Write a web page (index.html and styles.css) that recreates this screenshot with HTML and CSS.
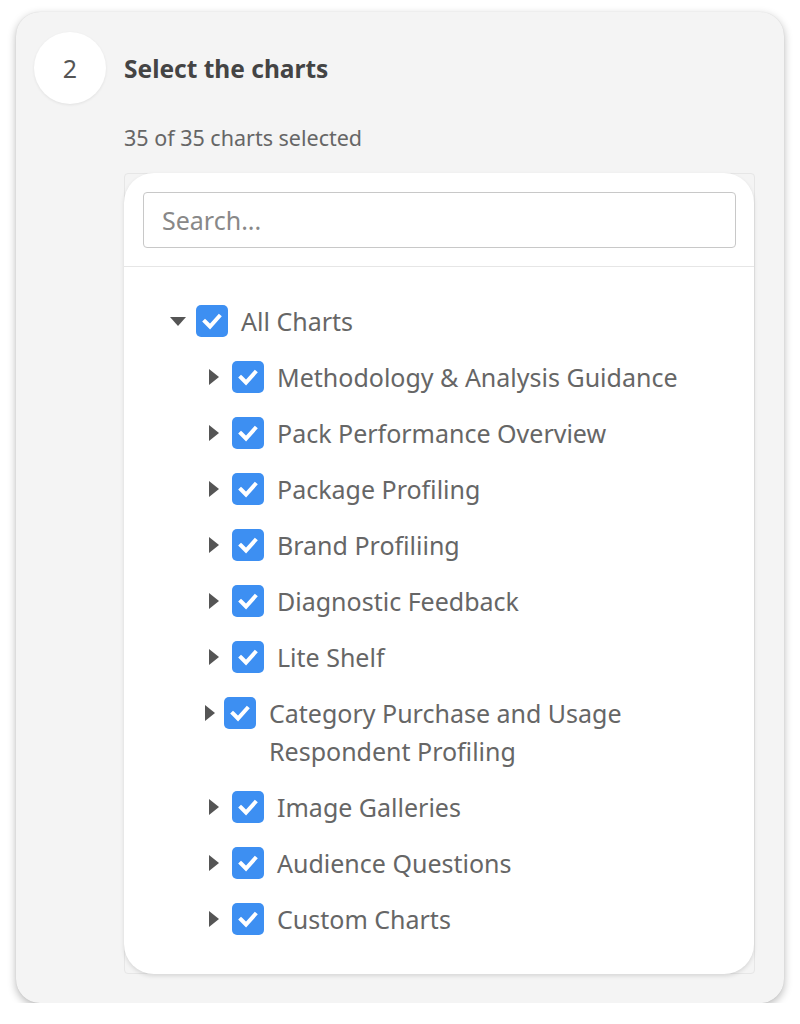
FILE: index.html
```html
<!DOCTYPE html>
<html>
<head>
<meta charset="utf-8">
<link rel="stylesheet" href="styles.css">
</head>
<body>
<div class="card">
  <div class="header">
    <div class="step">2</div>
    <div class="title">Select the charts</div>
  </div>
  <div class="body">
    <div class="count">35 of 35 charts selected</div>
    <div class="frame">
      <div class="panel">
        <div class="search-wrap">
          <input class="search" type="text" placeholder="Search...">
        </div>
        <div class="tree">
          <div class="row root">
            <span class="caret"><span class="tri-down"></span></span>
            <span class="check"><svg viewBox="0 0 32 32" width="32" height="32"><path d="M9 16.5l5 5 9-10" fill="none" stroke="#fff" stroke-width="4" stroke-linecap="square"/></svg></span>
            <span class="label">All Charts</span>
          </div>
          <div class="children">
            <div class="row">
              <span class="caret"><span class="tri-right"></span></span>
              <span class="check"><svg viewBox="0 0 32 32" width="32" height="32"><path d="M9 16.5l5 5 9-10" fill="none" stroke="#fff" stroke-width="4" stroke-linecap="square"/></svg></span>
              <span class="label">Methodology &amp; Analysis Guidance</span>
            </div>
            <div class="row">
              <span class="caret"><span class="tri-right"></span></span>
              <span class="check"><svg viewBox="0 0 32 32" width="32" height="32"><path d="M9 16.5l5 5 9-10" fill="none" stroke="#fff" stroke-width="4" stroke-linecap="square"/></svg></span>
              <span class="label">Pack Performance Overview</span>
            </div>
            <div class="row">
              <span class="caret"><span class="tri-right"></span></span>
              <span class="check"><svg viewBox="0 0 32 32" width="32" height="32"><path d="M9 16.5l5 5 9-10" fill="none" stroke="#fff" stroke-width="4" stroke-linecap="square"/></svg></span>
              <span class="label">Package Profiling</span>
            </div>
            <div class="row">
              <span class="caret"><span class="tri-right"></span></span>
              <span class="check"><svg viewBox="0 0 32 32" width="32" height="32"><path d="M9 16.5l5 5 9-10" fill="none" stroke="#fff" stroke-width="4" stroke-linecap="square"/></svg></span>
              <span class="label">Brand Profiliing</span>
            </div>
            <div class="row">
              <span class="caret"><span class="tri-right"></span></span>
              <span class="check"><svg viewBox="0 0 32 32" width="32" height="32"><path d="M9 16.5l5 5 9-10" fill="none" stroke="#fff" stroke-width="4" stroke-linecap="square"/></svg></span>
              <span class="label">Diagnostic Feedback</span>
            </div>
            <div class="row">
              <span class="caret"><span class="tri-right"></span></span>
              <span class="check"><svg viewBox="0 0 32 32" width="32" height="32"><path d="M9 16.5l5 5 9-10" fill="none" stroke="#fff" stroke-width="4" stroke-linecap="square"/></svg></span>
              <span class="label">Lite Shelf</span>
            </div>
            <div class="row wrap">
              <span class="caret"><span class="tri-right"></span></span>
              <span class="check"><svg viewBox="0 0 32 32" width="32" height="32"><path d="M9 16.5l5 5 9-10" fill="none" stroke="#fff" stroke-width="4" stroke-linecap="square"/></svg></span>
              <span class="label">Category Purchase and Usage Respondent Profiling</span>
            </div>
            <div class="row">
              <span class="caret"><span class="tri-right"></span></span>
              <span class="check"><svg viewBox="0 0 32 32" width="32" height="32"><path d="M9 16.5l5 5 9-10" fill="none" stroke="#fff" stroke-width="4" stroke-linecap="square"/></svg></span>
              <span class="label">Image Galleries</span>
            </div>
            <div class="row">
              <span class="caret"><span class="tri-right"></span></span>
              <span class="check"><svg viewBox="0 0 32 32" width="32" height="32"><path d="M9 16.5l5 5 9-10" fill="none" stroke="#fff" stroke-width="4" stroke-linecap="square"/></svg></span>
              <span class="label">Audience Questions</span>
            </div>
            <div class="row">
              <span class="caret"><span class="tri-right"></span></span>
              <span class="check"><svg viewBox="0 0 32 32" width="32" height="32"><path d="M9 16.5l5 5 9-10" fill="none" stroke="#fff" stroke-width="4" stroke-linecap="square"/></svg></span>
              <span class="label">Custom Charts</span>
            </div>
          </div>
        </div>
      </div>
    </div>
  </div>
</div>
</body>
</html>
```

FILE: styles.css
```css
* { box-sizing: border-box; }
html, body { margin: 0; padding: 0; background: #fff; }
body {
  padding: 12px 16px 0 16px;
  font-family: "Noto Sans", "Open Sans", sans-serif;
}
.card {
  width: 768px;
  height: 991px;
  background: #f4f4f4;
  border-radius: 24px;
  box-shadow: 0 3px 8px rgba(0,0,0,0.28), 0 0 1px rgba(0,0,0,0.12);
  padding: 20px 29px 29px 18px;
  display: flex;
  flex-direction: column;
}
.header {
  display: flex;
  align-items: center;
  gap: 18px;
  height: 72px;
}
.step {
  width: 72px;
  height: 72px;
  border-radius: 50%;
  background: #fff;
  box-shadow: 0 1px 3px rgba(0,0,0,0.08);
  display: flex;
  align-items: center;
  justify-content: center;
  font-size: 25px;
  color: #555;
  flex-shrink: 0;
}
.title {
  font-size: 24.5px;
  font-weight: 700;
  color: #444;
}
.body {
  padding-left: 90px;
  flex: 1;
  display: flex;
  flex-direction: column;
}
.count {
  margin-top: 21px;
  font-size: 21.5px;
  line-height: 26px;
  color: #666;
}
.frame {
  margin-top: 22px;
  flex: 1;
  border: 1px solid #e6e6e6;
  border-radius: 4px;
  display: flex;
}
.panel {
  flex: 1;
  margin: -1px 0 -1px -1px;
  background: #fff;
  border-radius: 30px;
  box-shadow: 0 2px 4px rgba(0,0,0,0.12);
}
.search-wrap {
  padding: 19px 18px 18px 19px;
  border-bottom: 1px solid #e6e6e6;
}
.search {
  display: block;
  width: 100%;
  height: 56px;
  border: 1px solid #c8c8c8;
  border-radius: 4px;
  padding: 0 18px;
  font-family: "Noto Sans", "Open Sans", sans-serif;
  font-size: 25px;
  color: #555;
  outline: none;
}
.search::placeholder { color: #888; }
.tree {
  padding: 26px 20px 26px 44px;
}
.children {
  padding-left: 36px;
}
.row {
  display: flex;
  align-items: flex-start;
  padding: 9px 0;
}
.caret {
  width: 20px;
  height: 38px;
  margin-right: 8px;
  display: flex;
  align-items: center;
  justify-content: center;
  flex-shrink: 0;
}
.row.wrap .caret { width: 12px; }
.tri-down {
  width: 0; height: 0;
  border-left: 8px solid transparent;
  border-right: 8px solid transparent;
  border-top: 9px solid #555;
}
.tri-right {
  width: 0; height: 0;
  border-top: 8px solid transparent;
  border-bottom: 8px solid transparent;
  border-left: 10px solid #555;
}
.check {
  width: 32px;
  height: 32px;
  margin-top: 3px;
  border-radius: 5px;
  background: #3d8ff2;
  flex-shrink: 0;
  display: flex;
}
.label {
  margin-left: 13px;
  font-size: 25px;
  line-height: 38px;
  color: #666;
}
```
